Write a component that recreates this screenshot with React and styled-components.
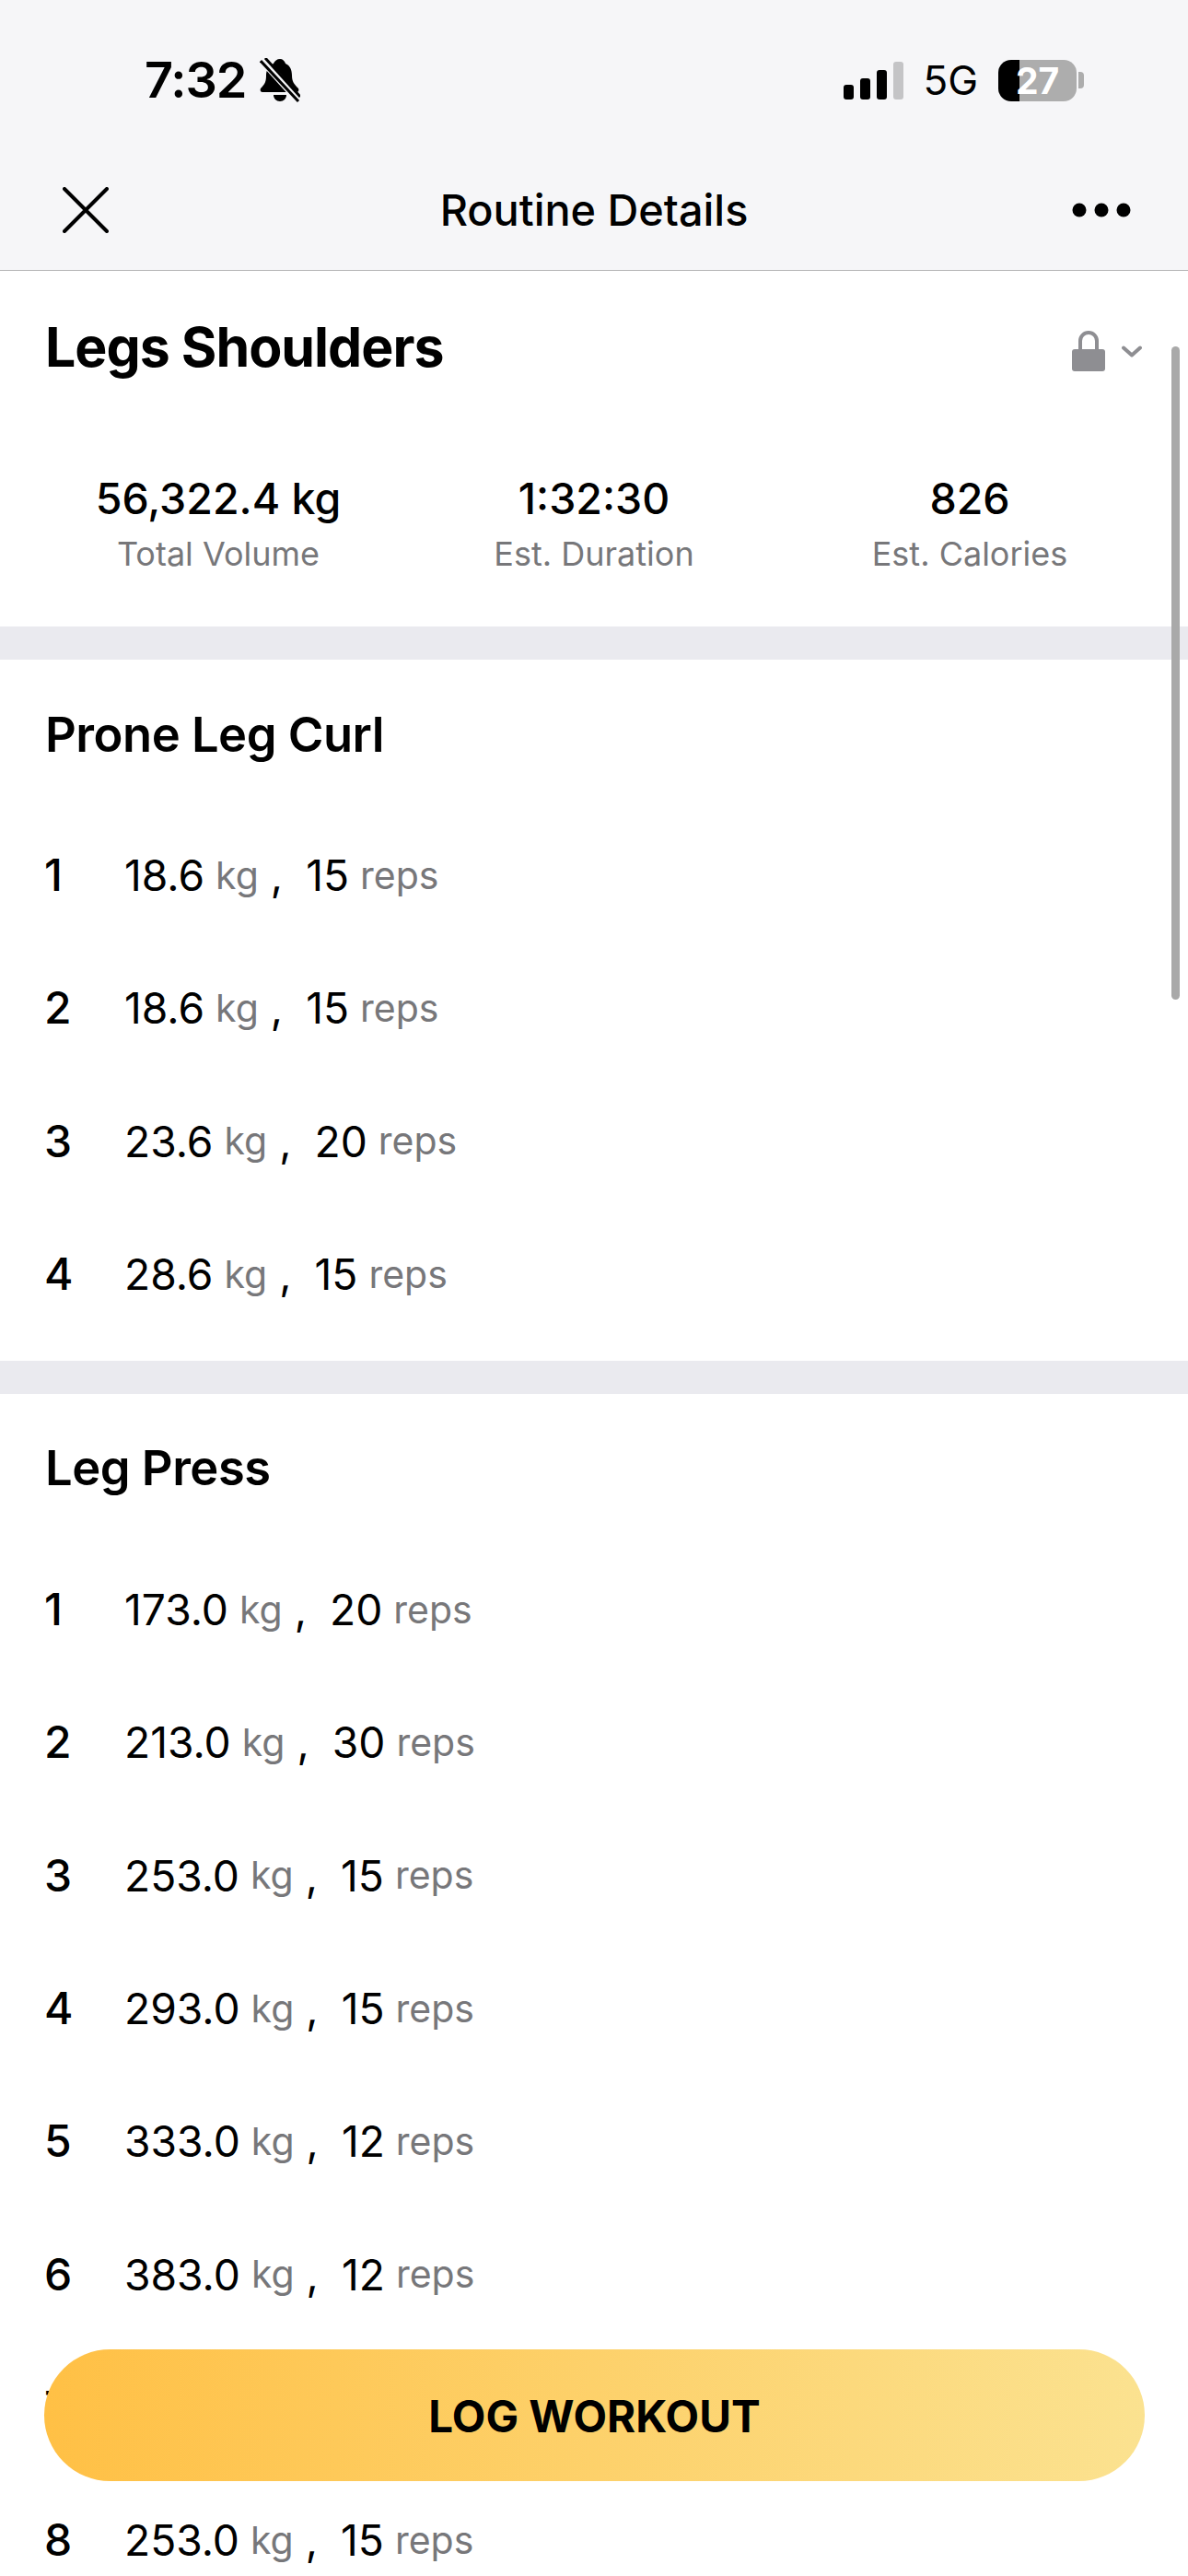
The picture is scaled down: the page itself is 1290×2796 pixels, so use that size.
import React from 'react';
import styled, { createGlobalStyle } from 'styled-components';

const GlobalStyle = createGlobalStyle`
  html, body {
    margin: 0;
    padding: 0;
    background: #fff;
    font-family: Inter, "Liberation Sans", sans-serif;
    color: #000;
  }
  * { box-sizing: border-box; }
`;

const Page = styled.div`
  position: relative;
  width: 1290px;
  height: 2796px;
  overflow: hidden;
  background: #fff;
`;

const Header = styled.header`
  background: #f6f6f8;
  border-bottom: 1px solid #b4b4b6;
  height: 294px;
`;

const StatusBar = styled.div`
  height: 163px;
  padding: 11px 0 0 157px;
  display: flex;
  align-items: center;
`;

const Time = styled.span`
  font-size: 54px;
  font-weight: 600;
  letter-spacing: -1px;
  line-height: 1;
`;

const BellIcon = styled.svg`
  width: 44px;
  height: 48px;
  margin-left: 14px;
`;

const StatusRight = styled.div`
  margin-left: auto;
  margin-right: 113px;
  display: flex;
  align-items: center;
`;

const Signal = styled.div`
  display: flex;
  align-items: flex-end;
  gap: 7px;
  height: 41px;
`;

const SignalBar = styled.span`
  width: 11px;
  height: ${p => p.$h}px;
  border-radius: 3px;
  background: ${p => (p.$off ? '#c4c4c6' : '#000')};
`;

const Network = styled.span`
  margin-left: 21px;
  font-size: 44px;
  font-weight: 400;
  line-height: 1;
`;

const Battery = styled.div`
  margin-left: 22px;
  width: 85px;
  height: 45px;
  border-radius: 14px;
  overflow: hidden;
  background: linear-gradient(to right, #000 27%, #adadad 27%);
  color: #fff;
  font-size: 39px;
  font-weight: 700;
  line-height: 45px;
  text-align: center;
`;

const BatteryCap = styled.span`
  width: 6px;
  height: 18px;
  margin-left: 2px;
  border-radius: 0 4px 4px 0;
  background: #adadad;
`;

const NavBar = styled.nav`
  height: 130px;
  padding: 0 62px;
  display: grid;
  grid-template-columns: 1fr auto 1fr;
  align-items: center;
`;

const IconSvg = styled.svg`
  display: block;
  flex: none;
`;

const CloseIcon = styled(IconSvg)`
  margin-left: 6px;
`;

const MoreIcon = styled(IconSvg)`
  justify-self: end;
`;

const NavTitle = styled.h1`
  margin: 0;
  font-size: 46.8px;
  font-weight: 500;
  line-height: 1;
`;

const Summary = styled.section`
  height: 386px;
`;

const SummaryHead = styled.div`
  height: 164px;
  padding: 0 50px 0 49px;
  display: flex;
  align-items: center;
  justify-content: space-between;
`;

const RoutineName = styled.h2`
  margin: 0;
  font-size: 59px;
  font-weight: 700;
  letter-spacing: -1px;
  line-height: 1;
`;

const Privacy = styled.div`
  margin-top: 10px;
  display: flex;
  align-items: center;
  gap: 18px;
`;

const Stats = styled.div`
  padding: 0 33px;
  display: grid;
  grid-template-columns: repeat(3, 1fr);
  margin-top: 53px;
`;

const Stat = styled.div`
  text-align: center;
`;

const StatValue = styled.div`
  font-size: 46.5px;
  font-weight: 500;
  line-height: 60px;
`;

const StatLabel = styled.div`
  margin-top: 2px;
  font-size: 36px;
  color: #77777a;
  line-height: 56px;
`;

const Divider = styled.div`
  height: 36px;
  background: #eaeaef;
`;

const ExerciseTitle = styled.h3`
  margin: 0;
  height: 161px;
  padding-left: 49px;
  display: flex;
  align-items: center;
  font-size: 52.5px;
  font-weight: 600;
  letter-spacing: -0.5px;
`;

const SetList = styled.div`
  padding-top: 1px;
  padding-bottom: 21.8px;
`;

const SetRow = styled.div`
  height: 144.3px;
  display: flex;
  align-items: center;
  font-size: 46.2px;
  line-height: 1;
`;

const SetNumber = styled.span`
  width: 135px;
  padding-left: 48px;
  font-size: 48px;
  font-weight: 500;
`;

const Unit = styled.span`
  margin-left: 12px;
  font-size: 41px;
  color: #77777a;
`;

const Comma = styled.span`
  margin: 0 25px 0 13px;
`;

const Scrollbar = styled.div`
  position: absolute;
  top: 376px;
  right: 9px;
  width: 9px;
  height: 709px;
  border-radius: 5px;
  background: #a9a9a9;
`;

const LogButton = styled.button`
  position: absolute;
  left: 48px;
  top: 2550px;
  width: 1195px;
  height: 143px;
  padding: 2px 0 0;
  border: 0;
  border-radius: 72px;
  background: linear-gradient(to right, #ffc045, #fbe290);
  color: #000;
  font-family: inherit;
  font-size: 47.5px;
  font-weight: 700;
`;

const exercises = [
  {
    name: 'Prone Leg Curl',
    sets: [['18.6', '15'], ['18.6', '15'], ['23.6', '20'], ['28.6', '15']],
  },
  {
    name: 'Leg Press',
    sets: [
      ['173.0', '20'],
      ['213.0', '30'],
      ['253.0', '15'],
      ['293.0', '15'],
      ['333.0', '12'],
      ['383.0', '12'],
      null,
      ['253.0', '15'],
    ],
  },
];

const stats = [
  ['56,322.4 kg', 'Total Volume'],
  ['1:32:30', 'Est. Duration'],
  ['826', 'Est. Calories'],
];

export default function App() {
  return (
    <Page>
      <GlobalStyle />
      <Header>
        <StatusBar>
          <Time>7:32</Time>
          <BellIcon viewBox="0 0 44 48">
            <path d="M22 1c3 0 5 2 6 5 5 2 7 7 7 13 0 6 2 9 7 14 1 2 0 4-2 4H3c-2 0-3-2-2-4 5-5 6-8 6-14 0-6 3-11 8-13 1-3 4-5 7-5z" />
            <path d="M15 40h14c0 4-3 7-7 7s-7-3-7-7z" />
            <path d="M2 1l40 44" stroke="#f6f6f8" strokeWidth="9" />
            <path d="M1 3l41 44" stroke="#000" strokeWidth="3" />
            <path d="M6 0l38 42" stroke="#000" strokeWidth="3" />
          </BellIcon>
          <StatusRight>
            <Signal>
              <SignalBar $h={16} />
              <SignalBar $h={23} />
              <SignalBar $h={32} />
              <SignalBar $h={41} $off />
            </Signal>
            <Network>5G</Network>
            <Battery>27</Battery>
            <BatteryCap />
          </StatusRight>
        </StatusBar>
        <NavBar>
          <CloseIcon width="50" height="50" viewBox="0 0 50 50" fill="none" stroke="#000" strokeWidth="4" strokeLinecap="round">
            <path d="M2 2l46 46M48 2L2 48" />
          </CloseIcon>
          <NavTitle>Routine Details</NavTitle>
          <MoreIcon width="64" height="16" viewBox="0 0 64 16" fill="#000">
            <circle cx="8" cy="8" r="7.5" />
            <circle cx="32" cy="8" r="7.5" />
            <circle cx="56" cy="8" r="7.5" />
          </MoreIcon>
        </NavBar>
      </Header>

      <Summary>
        <SummaryHead>
          <RoutineName>Legs Shoulders</RoutineName>
          <Privacy>
            <IconSvg width="36" height="44" viewBox="0 0 36 44">
              <path d="M9 20V11a9 9 0 0 1 18 0v9" fill="none" stroke="#8e8e92" strokeWidth="4" />
              <rect x="0" y="20" width="36" height="24" rx="3" fill="#8e8e92" />
            </IconSvg>
            <IconSvg width="22" height="13" viewBox="0 0 22 13" fill="none" stroke="#8e8e92" strokeWidth="4" strokeLinecap="round" strokeLinejoin="round">
              <path d="M2 2.5l9 8 9-8" />
            </IconSvg>
          </Privacy>
        </SummaryHead>
        <Stats>
          {stats.map(([value, label]) => (
            <Stat key={label}>
              <StatValue>{value}</StatValue>
              <StatLabel>{label}</StatLabel>
            </Stat>
          ))}
        </Stats>
      </Summary>

      {exercises.map((exercise) => (
        <section key={exercise.name}>
          <Divider />
          <ExerciseTitle>{exercise.name}</ExerciseTitle>
          <SetList>
            {exercise.sets.map((set, index) => (
              <SetRow key={index}>
                <SetNumber>{index + 1}</SetNumber>
                {set && (
                  <>
                    {set[0]}
                    <Unit>kg</Unit>
                    <Comma>,</Comma>
                    {set[1]}
                    <Unit>reps</Unit>
                  </>
                )}
              </SetRow>
            ))}
          </SetList>
        </section>
      ))}

      <Scrollbar />
      <LogButton>LOG WORKOUT</LogButton>
    </Page>
  );
}
